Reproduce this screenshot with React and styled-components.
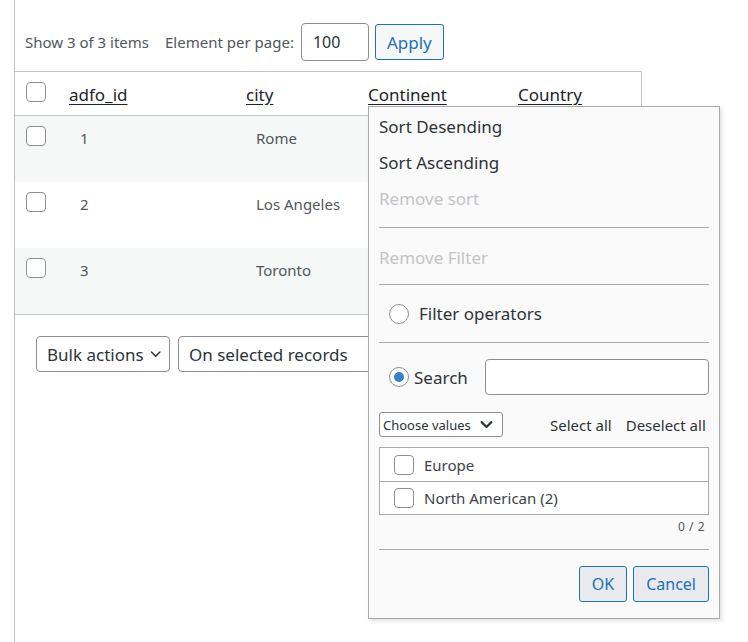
import React from "react";
import styled, { createGlobalStyle } from "styled-components";

const GlobalStyle = createGlobalStyle`
  html, body { margin: 0; padding: 0; background: #fff; }
  body { font-family: "Noto Sans", "Open Sans", sans-serif; color: #3c434a; }
  * { box-sizing: border-box; }
`;

const Page = styled.div`
  position: relative;
  margin-left: 14px;
  padding-top: 23px;
  min-height: 642px;
  border-left: 1px solid #c3c4c7;
`;

const Toolbar = styled.div`
  display: flex;
  align-items: center;
  height: 38px;
  padding-left: 10px;
  font-size: 15px;
  color: #50575e;
`;

const Label = styled.span`
  margin-right: ${(p) => p.$mr || 0}px;
  white-space: nowrap;
`;

const NumberInput = styled.div`
  width: 68px;
  height: 38px;
  margin-right: 6px;
  border: 1px solid #8c8f94;
  border-radius: 4px;
  padding-left: 11px;
  display: flex;
  align-items: center;
  font-size: 16px;
  color: #2c3338;
`;

const BlueButton = styled.button`
  height: ${(p) => p.$h || 36}px;
  padding: 0 ${(p) => p.$px || 12}px;
  border: 1px solid #2271b1;
  border-radius: 3px;
  background: ${(p) => p.$bg || "#f6f7f7"};
  color: #2271b1;
  font-family: inherit;
  font-size: ${(p) => p.$fs || 17}px;
  display: flex;
  align-items: center;
  justify-content: center;
`;

const Table = styled.div`
  margin-top: 10px;
  margin-left: -1px;
  width: 628px;
  border: 1px solid #c3c4c7;
`;

const Row = styled.div`
  display: grid;
  grid-template-columns: 54px 177px 122px 150px 1fr;
  height: ${(p) => (p.$head ? 44 : 66)}px;
  background: ${(p) => (p.$alt ? "#f6f7f7" : "#fff")};
  border-bottom: ${(p) => (p.$head ? "1px solid #c3c4c7" : "none")};
`;

const CheckCell = styled.div`
  padding: 10px 0 0 11px;
`;

const Checkbox = styled.span`
  display: block;
  width: 20px;
  height: 20px;
  border: 1px solid #8c8f94;
  border-radius: 4px;
  background: #fff;
  flex: none;
`;

const HeadCell = styled.div`
  font-size: 17px;
  color: #1d2327;
  text-decoration: underline;
  text-underline-offset: 3px;
  padding-top: 11px;
  white-space: nowrap;
`;

const Cell = styled.div`
  font-size: 15px;
  color: #50575e;
  padding: 12px 0 0 ${(p) => p.$pl || 11}px;
`;

const BottomBar = styled.div`
  display: flex;
  gap: 8px;
  margin-top: 21px;
  padding-left: 21px;
`;

const Select = styled.div`
  height: 36px;
  border: 1px solid #8c8f94;
  border-radius: 4px;
  display: flex;
  align-items: center;
  gap: 6px;
  padding: 0 8px 0 10px;
  font-size: 17px;
  color: #2c3338;
  width: ${(p) => p.$w}px;
  white-space: nowrap;
  background: #fff;
`;

const Menu = styled.div`
  position: absolute;
  left: 353px;
  top: 106px;
  width: 352px;
  height: 513px;
  background: #fafafa;
  border: 1px solid #a7aaad;
  box-shadow: 2px 2px 4px rgba(0, 0, 0, 0.12);
  padding: 1px 10px 0 10px;
  display: flex;
  flex-direction: column;
`;

const MenuItem = styled.div`
  height: 36px;
  display: flex;
  align-items: center;
  font-size: 17px;
  color: ${(p) => (p.$disabled ? "#c3c4c7" : "#2c3338")};
`;

const Divider = styled.div`
  height: 1px;
  background: #a7aaad;
  margin: ${(p) => p.$mt || 0}px 0 ${(p) => p.$mb || 0}px;
  flex: none;
`;

const RadioRow = styled.label`
  display: flex;
  align-items: center;
  gap: ${(p) => p.$gap || 10}px;
  height: ${(p) => p.$h}px;
  padding-left: 10px;
  margin-top: ${(p) => p.$mt || 0}px;
  font-size: 17px;
  color: #2c3338;
`;

const Radio = styled.span`
  width: 20px;
  height: 20px;
  border-radius: 50%;
  border: 1px solid #8c8f94;
  background: #fff;
  display: flex;
  align-items: center;
  justify-content: center;
  flex: none;
  &::after {
    content: "";
    width: 10px;
    height: 10px;
    border-radius: 50%;
    background: ${(p) => (p.$checked ? "#3582c4" : "transparent")};
  }
`;

const SearchInput = styled.div`
  margin-left: auto;
  width: 224px;
  height: 36px;
  border: 1px solid #8c8f94;
  border-radius: 4px;
  background: #fff;
`;

const ValuesBar = styled.div`
  display: flex;
  align-items: center;
  margin-top: 17px;
  height: 25px;
  font-size: 15px;
  color: #2c3338;
`;

const SmallSelect = styled.div`
  width: 124px;
  height: 25px;
  border: 1px solid #8c8f94;
  border-radius: 3px;
  display: flex;
  align-items: center;
  justify-content: space-between;
  padding: 0 9px 0 3px;
  font-size: 13px;
  color: #2c3338;
  background: #fff;
`;

const LinkText = styled.span`
  margin-left: ${(p) => p.$ml || 0}px;
`;

const ValueList = styled.div`
  margin-top: 10px;
  border: 1px solid #a7aaad;
  background: #fff;
`;

const ValueRow = styled.div`
  height: 33px;
  display: flex;
  align-items: center;
  gap: 10px;
  padding-left: 14px;
  font-size: 15px;
  color: #3c434a;
  border-top: ${(p) => (p.$first ? "none" : "1px solid #a7aaad")};
`;

const Count = styled.div`
  text-align: right;
  font-size: 12px;
  color: #50575e;
  padding-right: 4px;
  margin-top: 2px;
  height: 19px;
  line-height: 19px;
  letter-spacing: 0.5px;
`;

const Actions = styled.div`
  display: flex;
  justify-content: flex-end;
  gap: 6px;
  margin-top: 16px;
`;

const Chevron = ({ size = 12, stroke = 1.8 }) => (
  <svg width={size} height={size} viewBox="0 0 12 12" fill="none">
    <path d="M1.5 3.8l4.5 4.5 4.5-4.5" stroke="#2c3338" strokeWidth={stroke} strokeLinecap="round" strokeLinejoin="round" />
  </svg>
);

const rows = [
  { id: 1, city: "Rome" },
  { id: 2, city: "Los Angeles" },
  { id: 3, city: "Toronto" },
];

export default function App() {
  return (
    <>
      <GlobalStyle />
      <Page>
        <Toolbar>
          <Label $mr={16}>Show 3 of 3 items</Label>
          <Label $mr={7}>Element per page:</Label>
          <NumberInput>100</NumberInput>
          <BlueButton $px={11}>Apply</BlueButton>
        </Toolbar>
        <Table>
          <Row $head>
            <CheckCell>
              <Checkbox />
            </CheckCell>
            <HeadCell>adfo_id</HeadCell>
            <HeadCell>city</HeadCell>
            <HeadCell>Continent</HeadCell>
            <HeadCell>Country</HeadCell>
          </Row>
          {rows.map((r, i) => (
            <Row key={r.id} $alt={i % 2 === 0}>
              <CheckCell>
                <Checkbox />
              </CheckCell>
              <Cell>{r.id}</Cell>
              <Cell $pl={10}>{r.city}</Cell>
              <Cell />
              <Cell />
            </Row>
          ))}
        </Table>
        <BottomBar>
          <Select $w={134}>
            Bulk actions <Chevron size={14} stroke={1.5} />
          </Select>
          <Select $w={200}>On selected records</Select>
        </BottomBar>

        <Menu>
          <MenuItem>Sort Desending</MenuItem>
          <MenuItem>Sort Ascending</MenuItem>
          <MenuItem $disabled>Remove sort</MenuItem>
          <Divider $mt={11} $mb={11} />
          <MenuItem $disabled>Remove Filter</MenuItem>
          <Divider $mt={9} />
          <RadioRow $h={57}>
            <Radio />
            Filter operators
          </RadioRow>
          <Divider />
          <RadioRow $h={36} $mt={16} $gap={5}>
            <Radio $checked />
            Search
            <SearchInput />
          </RadioRow>
          <ValuesBar>
            <SmallSelect>
              Choose values <Chevron size={13} stroke={2} />
            </SmallSelect>
            <LinkText $ml={47}>Select all</LinkText>
            <LinkText $ml={14}>Deselect all</LinkText>
          </ValuesBar>
          <ValueList>
            <ValueRow $first>
              <Checkbox />
              Europe
            </ValueRow>
            <ValueRow>
              <Checkbox />
              North American (2)
            </ValueRow>
          </ValueList>
          <Count>0 / 2</Count>
          <Divider $mt={13} />
          <Actions>
            <BlueButton $h={36} $px={12} $fs={16} $bg="#e9eaee">OK</BlueButton>
            <BlueButton $h={36} $px={12} $fs={16} $bg="#e9eaee">Cancel</BlueButton>
          </Actions>
        </Menu>
      </Page>
    </>
  );
}
